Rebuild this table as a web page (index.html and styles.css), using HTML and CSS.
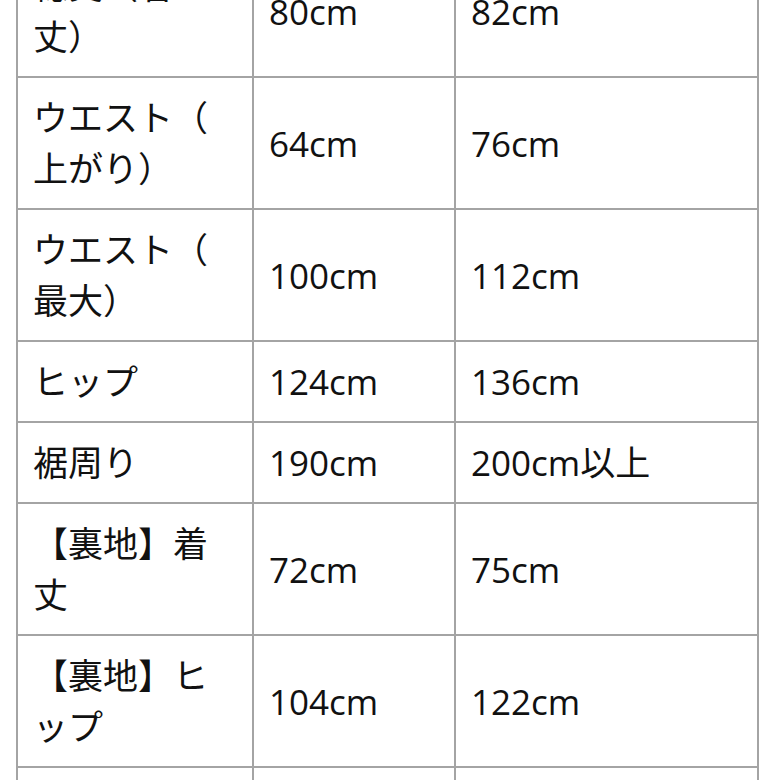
FILE: index.html
```html
<!DOCTYPE html>
<html lang="ja">
<head>
<meta charset="utf-8">
<title>サイズ表</title>
<link rel="stylesheet" href="styles.css">
</head>
<body>
<div class="page">
  <table class="size">
    <colgroup><col class="c1"><col class="c2"><col class="c3"></colgroup>
    <tbody>
      <tr><td>総丈（着<span class="nb">丈）</span></td><td>80cm</td><td>82cm</td></tr>
      <tr><td>ウエスト（上がり）</td><td>64cm</td><td>76cm</td></tr>
      <tr><td>ウエスト（最大）</td><td>100cm</td><td>112cm</td></tr>
      <tr><td>ヒップ</td><td>124cm</td><td>136cm</td></tr>
      <tr><td>裾周り</td><td>190cm</td><td>200cm以上</td></tr>
      <tr><td>【裏地】着丈</td><td>72cm</td><td>75cm</td></tr>
      <tr><td>【裏地】ヒップ</td><td>104cm</td><td>122cm</td></tr>
      <tr><td>【裏地】裾周り</td><td>160cm</td><td>170cm</td></tr>
    </tbody>
  </table>
</div>
</body>
</html>
```

FILE: styles.css
```css
html, body {
  margin: 0;
  padding: 0;
  background: #ffffff;
}

.page {
  padding-left: 16px;
  margin-top: -56px;
}

.size {
  border-collapse: collapse;
  table-layout: fixed;
  width: 742px;
  font-family: "Open Sans", "Noto Sans CJK JP", sans-serif;
  font-size: 35px;
  line-height: 51px;
  color: #111111;
}

.c1 { width: 236px; }
.c2 { width: 202px; }
.c3 { width: 303px; }

.size td {
  border: 2px solid #a4a4a4;
  padding: 14px 14px 14px 15px;
  vertical-align: middle;
  text-align: left;
  line-break: anywhere;
  font-weight: 400;
}

.nb {
  white-space: nowrap;
}
```
